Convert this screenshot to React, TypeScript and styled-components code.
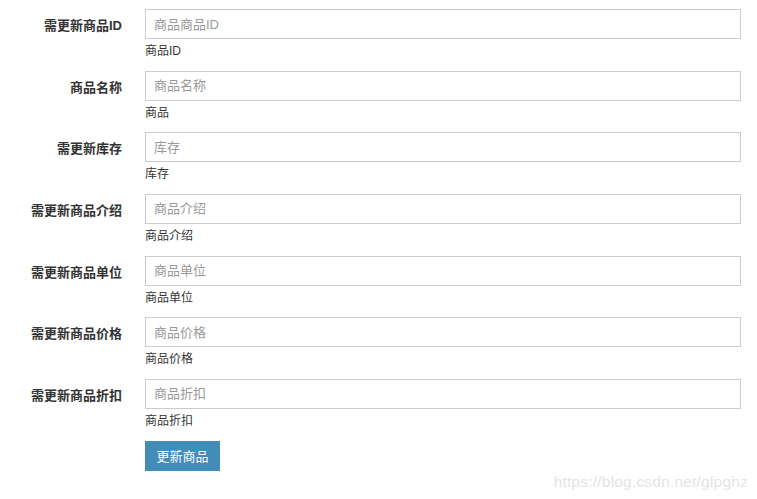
import React from "react";
import styled, { createGlobalStyle } from "styled-components";

const Global = createGlobalStyle`
  html, body { margin: 0; padding: 0; background: #fff; }
  body {
    font-family: "Liberation Sans", "Noto Sans CJK SC", sans-serif;
    color: #333;
    width: 757px;
    height: 499px;
    overflow: hidden;
  }
`;

const Page = styled.div`
  position: relative;
  width: 757px;
  height: 499px;
  padding-top: 9px;
  box-sizing: border-box;
`;

const Form = styled.form`
  display: flex;
  flex-direction: column;
  margin: 0;
`;

const Group = styled.div`
  display: grid;
  grid-template-columns: 122px 596px;
  column-gap: 23px;
  height: 61.67px;
`;

const Label = styled.label`
  font-family: "Liberation Sans", "Noto Sans CJK SC", sans-serif;
  font-weight: bold;
  font-size: 13px;
  color: #333;
  text-align: right;
  padding-top: 2px;
  height: 30px;
  line-height: 30px;
  white-space: nowrap;
`;

const Field = styled.div`
  display: flex;
  flex-direction: column;
`;

const Input = styled.input`
  box-sizing: border-box;
  width: 596px;
  height: 30px;
  margin: 0;
  padding: 0 8px;
  border: 1px solid #ccc;
  border-radius: 0;
  font-family: "Liberation Sans", "Noto Sans CJK SC", sans-serif;
  font-size: 13px;
  color: #555;
  background: #fff;
  outline: none;
  &::placeholder { color: #999; }
`;

const Help = styled.span`
  margin-top: 4px;
  font-size: 12px;
  line-height: 16px;
  color: #333;
`;

const Actions = styled.div`
  padding-left: 145px;
`;

const Button = styled.button`
  box-sizing: border-box;
  height: 30px;
  width: 75px;
  padding: 0;
  border: none;
  border-radius: 0;
  background: #428cba;
  color: #fff;
  font-family: "Liberation Sans", "Noto Sans CJK SC", sans-serif;
  font-size: 13px;
  cursor: pointer;
`;

const Watermark = styled.div`
  position: absolute;
  right: 9px;
  bottom: 8px;
  font-family: "Liberation Sans", Arial, sans-serif;
  font-size: 15.5px;
  color: #e4e4e4;
  letter-spacing: 0.2px;
`;

const fields = [
  { label: "需更新商品ID", placeholder: "商品商品ID", help: "商品ID" },
  { label: "商品名称", placeholder: "商品名称", help: "商品" },
  { label: "需更新库存", placeholder: "库存", help: "库存" },
  { label: "需更新商品介绍", placeholder: "商品介绍", help: "商品介绍" },
  { label: "需更新商品单位", placeholder: "商品单位", help: "商品单位" },
  { label: "需更新商品价格", placeholder: "商品价格", help: "商品价格" },
  { label: "需更新商品折扣", placeholder: "商品折扣", help: "商品折扣" },
];

export default function App() {
  return (
    <Page>
      <Global />
      <Form onSubmit={(e) => e.preventDefault()}>
        {fields.map((f) => (
          <Group key={f.label}>
            <Label>{f.label}</Label>
            <Field>
              <Input placeholder={f.placeholder} />
              <Help>{f.help}</Help>
            </Field>
          </Group>
        ))}
        <Actions>
          <Button type="submit">更新商品</Button>
        </Actions>
      </Form>
      <Watermark>https://blog.csdn.net/glpghz</Watermark>
    </Page>
  );
}
